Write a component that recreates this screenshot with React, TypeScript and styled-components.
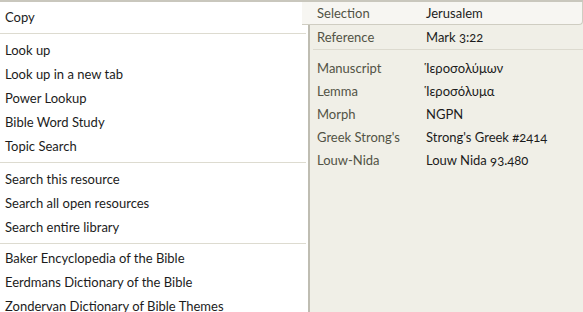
import React from "react";
import styled, { createGlobalStyle } from "styled-components";

const GlobalStyle = createGlobalStyle`
  html, body {
    margin: 0;
    padding: 0;
    background: #ffffff;
  }
  body {
    font-family: Lato, "Open Sans", sans-serif;
    font-size: 13px;
    color: #1c1c1c;
    font-variant-numeric: oldstyle-nums;
  }
`;

const Frame = styled.div`
  width: 583px;
  height: 312px;
  overflow: hidden;
  display: flex;
  border-top: 2px solid #c9c7bd;
  box-sizing: border-box;
`;

const Menu = styled.div`
  width: 308px;
  flex: 0 0 308px;
  padding-top: 3px;
  background: #ffffff;
`;

const MenuItem = styled.div`
  height: 24px;
  line-height: 24px;
  padding-left: 5px;
  white-space: nowrap;
`;

const MenuSeparator = styled.div<{ $tight?: boolean }>`
  height: 1px;
  margin: 4px 2px ${(p) => (p.$tight ? "2px" : "4px")} 0;
  background: #dddbd0;
`;

const Panel = styled.div`
  flex: 1;
  display: flex;
  flex-direction: column;
  background: #f0efe7;
`;

const SelectionRow = styled.div`
  display: flex;
  height: 22px;
  align-items: center;
  margin-left: -6px;
  padding-left: 15px;
  background: #f7f6f2;
  border: 1px solid #cfcdc2;
  border-top: none;
  border-left: none;
  border-bottom-right-radius: 4px;
`;

const Body = styled.div`
  flex: 1;
  border-left: 2px solid #bfbdb2;
  padding-left: 7px;
`;

const Row = styled.div`
  display: flex;
  height: 23px;
  align-items: center;
`;

const Label = styled.span`
  width: 109px;
  color: #525345;
`;

const Value = styled.span`
  color: #1c1c1c;
`;

const PanelSeparator = styled.div`
  height: 1px;
  margin: 1px 0 6px -4px;
  background: #dcdacf;
`;

const groups = [
  ["Copy"],
  ["Look up", "Look up in a new tab", "Power Lookup", "Bible Word Study", "Topic Search"],
  ["Search this resource", "Search all open resources", "Search entire library"],
  [
    "Baker Encyclopedia of the Bible",
    "Eerdmans Dictionary of the Bible",
    "Zondervan Dictionary of Bible Themes",
  ],
];

const details = [
  ["Manuscript", "Ἱεροσολύμων"],
  ["Lemma", "Ἱεροσόλυμα"],
  ["Morph", "NGPN"],
  ["Greek Strong's", "Strong's Greek #2414"],
  ["Louw-Nida", "Louw Nida 93.480"],
];

const App = () => {
  return (
    <>
      <GlobalStyle />
      <Frame>
        <Menu>
          {groups.map((group, i) => (
            <React.Fragment key={i}>
              {i > 0 && <MenuSeparator $tight={i === 3} />}
              {group.map((item) => (
                <MenuItem key={item}>{item}</MenuItem>
              ))}
            </React.Fragment>
          ))}
        </Menu>
        <Panel>
          <SelectionRow>
            <Label>Selection</Label>
            <Value>Jerusalem</Value>
          </SelectionRow>
          <Body>
            <Row>
              <Label>Reference</Label>
              <Value>Mark 3:22</Value>
            </Row>
            <PanelSeparator />
            {details.map(([label, value]) => (
              <Row key={label}>
                <Label>{label}</Label>
                <Value>{value}</Value>
              </Row>
            ))}
          </Body>
        </Panel>
      </Frame>
    </>
  );
};

export default App;
